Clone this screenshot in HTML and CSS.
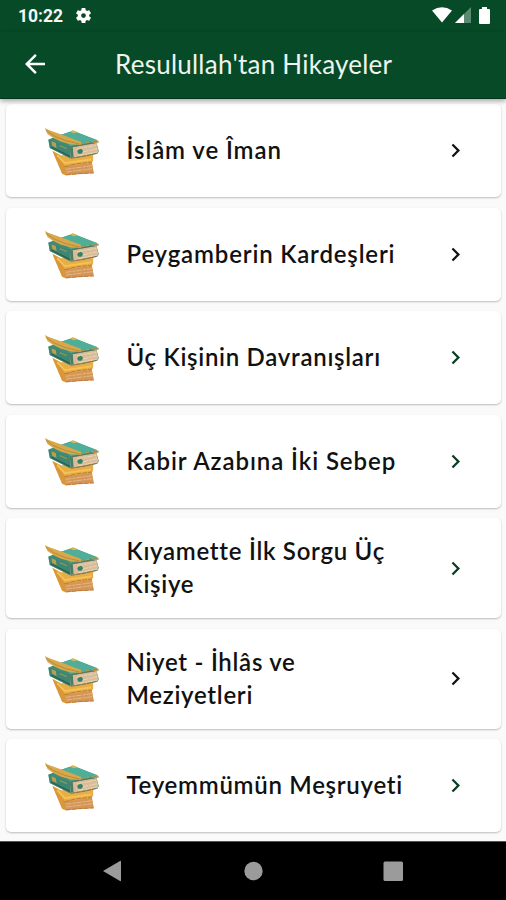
FILE: index.html
```html
<!DOCTYPE html>
<html lang="tr">
<head>
<meta charset="utf-8">
<title>Resulullah'tan Hikayeler</title>
<link rel="stylesheet" href="styles.css">
</head>
<body>
<svg class="defs" width="0" height="0">
  <symbol id="books" viewBox="25 30 170 150">
    <path d="M50 104 L76 118 L172 112 L172 134 L168 139 L174 170 L88 178 L79 173 Z" fill="#e9ad45"/>
    <path d="M50 106 L62 113 L88 152 L92 177 L79 173 Z" fill="#d9973a"/>
    <path d="M86 152 L168 140 L173 171 L92 176 Z" fill="#d49658"/>
    <path d="M90 160 L168 149 M91 168 L171 158" stroke="#e9bd88" stroke-width="2.5" stroke-dasharray="17 3 9 2" fill="none"/>
    <path d="M86 152 L120 144 L169 138 M90 177 L130 173 L174 171" stroke="#b5702f" stroke-width="2.5" stroke-dasharray="15 3" fill="none"/>
    <path d="M64 118 L87 141 L166 130" stroke="#f5c355" stroke-width="5" fill="none"/>
    <path d="M37 71 L58 62 L112 44 L188 75 L182 81 L189 106 L184 113 L103 127 L42 96 Z" fill="#3f8d79"/>
    <path d="M66 60 L111 44 L184 72 L105 90 Z" fill="#4fae97"/>
    <path d="M39 70 L101 94 L103 126 L42 96 Z" fill="#3c8673"/>
    <path d="M46 93 L102 121" stroke="#2d5f50" stroke-width="4" fill="none"/>
    <path d="M47 76 L60 81 L62 96 L49 89 Z" fill="#b99f50"/>
    <path d="M72 89 L93 98" stroke="#8a9658" stroke-width="4" fill="none"/>
    <path d="M102 95 L182 81 L188 107 L182 112 L105 126 Z" fill="#d9bd99"/>
    <path d="M124 98 L180 88 M140 108 L184 98 M126 119 L183 108" stroke="#ecd3b3" stroke-width="3" stroke-dasharray="17 3 9 2" fill="none"/>
    <path d="M102 94 L145 85 L185 79 M105 127 L145 121 L184 112" stroke="#7b6446" stroke-width="2.500" stroke-dasharray="14 2" fill="none"/>
    <path d="M102 95 L111 94 L113 123 L105 125 Z" fill="#4a7c66"/>
    <path d="M127 101 L136 98 L142 105 L137 113 L128 113 L124 107 Z" fill="#328267"/>
    <path d="M128 86 L184 73" stroke="#c9a54c" stroke-width="2.500" stroke-dasharray="16 3" fill="none"/>
    <path d="M102 46 L112 43 L126 49 L113 52 Z" fill="#dab659"/>
    <path d="M27 36 L39 42 L83 58 L136 78 L134 86 L104 85 L76 77 L51 65 L35 54 Z" fill="#d9a84a"/>
    <path d="M30 43 L55 60 L90 74 L131 84" stroke="#a87a36" stroke-width="2" fill="none"/>
    <path d="M188 74 L166 81 L189 80 Z" fill="#cf9c55"/>
  </symbol>
  <symbol id="chevron" viewBox="0 0 24 24"><path d="M10 6 8.59 7.41 13.17 12l-4.58 4.59L10 18l6-6z"/></symbol>
</svg>

<div class="statusbar">
  <span class="clock">10:22</span>
  <svg class="gear" viewBox="0 0 24 24"><path fill-rule="evenodd" d="M19.14 12.94a7.5 7.5 0 0 0 0-1.88l2.03-1.58a.5.5 0 0 0 .12-.61l-1.92-3.32a.5.5 0 0 0-.59-.22l-2.39.96a7 7 0 0 0-1.62-.94l-.36-2.54a.5.5 0 0 0-.48-.41h-3.84a.5.5 0 0 0-.47.41l-.36 2.54a7.4 7.4 0 0 0-1.62.94l-2.39-.96a.5.5 0 0 0-.59.22L2.74 8.87a.5.5 0 0 0 .12.61l2.03 1.58a7.500 7.500 0 0 0 0 1.88l-2.03 1.58a.5.5 0 0 0-.12.61l1.92 3.32c.12.22.37.29.59.22l2.39-.96c.5.38 1.030.7 1.620.94l.36 2.540c.05.24.24.41.48.41h3.840c.24 0 .44-.17.47-.41l.36-2.540a7.400 7.400 0 0 0 1.620-.94l2.390.96c.22.08.47 0 .59-.22l1.920-3.320a.5.5 0 0 0-.12-.61zM12 15a3 3 0 1 1 0-6 3 3 0 0 1 0 6z"/></svg>
  <div class="indicators">
    <svg width="20" height="16" viewBox="0 0 20 16"><path d="M0 3.500Q10-3 20 3.500L10 15.500z"/></svg>
    <svg width="16" height="16" viewBox="0 0 16 16"><path d="M0 16 16 0v16z" opacity=".35"/><path d="M0 16 9 7v9z"/></svg>
    <svg width="11" height="17" viewBox="0 0 11 17"><path d="M3 0h5v2h2q1 0 1 1v13q0 1-1 1H1q-1 0-1-1V3q0-1 1-1h2z"/></svg>
  </div>
</div>
<header class="appbar">
  <svg class="back" viewBox="0 0 24 24"><path d="M20 11H7.830l5.590-5.590L12 4l-8 8 8 8 1.410-1.410L7.830 13H20z"/></svg>
  <h1 class="title">Resulullah'tan Hikayeler</h1>
</header>
<main class="list">
  <div class="card"><svg class="books"><use href="#books"/></svg><span class="label wide">İslâm ve Îman</span><svg class="chevron"><use href="#chevron"/></svg></div>
  <div class="card"><svg class="books"><use href="#books"/></svg><span class="label medium">Peygamberin Kardeşleri</span><svg class="chevron"><use href="#chevron"/></svg></div>
  <div class="card"><svg class="books"><use href="#books"/></svg><span class="label">Üç Kişinin Davranışları</span><svg class="chevron green"><use href="#chevron"/></svg></div>
  <div class="card"><svg class="books"><use href="#books"/></svg><span class="label wide">Kabir Azabına İki Sebep</span><svg class="chevron green"><use href="#chevron"/></svg></div>
  <div class="card tall"><svg class="books"><use href="#books"/></svg><span class="label">Kıyamette İlk Sorgu Üç<br>Kişiye</span><svg class="chevron green"><use href="#chevron"/></svg></div>
  <div class="card tall"><svg class="books"><use href="#books"/></svg><span class="label">Niyet - İhlâs ve<br>Meziyetleri</span><svg class="chevron"><use href="#chevron"/></svg></div>
  <div class="card"><svg class="books"><use href="#books"/></svg><span class="label">Teyemmümün Meşruyeti</span><svg class="chevron green"><use href="#chevron"/></svg></div>
</main>
<nav class="navbar">
  <svg width="20" height="22" viewBox="0 0 20 22"><path d="M0 11 17 1q1-.5 1 .5v19q0 1-1 .5z"/></svg>
  <svg width="20" height="20" viewBox="0 0 20 20"><circle cx="10.500" cy="10" r="9.200"/></svg>
  <svg width="20" height="20" viewBox="0 0 20 20"><rect x=".5" y=".5" width="19.500" height="19.500" rx="1.500"/></svg>
</nav>
</body>
</html>
```
FILE: styles.css
```css
* { box-sizing: border-box; }
body {
  margin: 0;
  width: 506px;
  height: 900px;
  overflow: hidden;
  display: flex;
  flex-direction: column;
  background: #fafafa;
  font-family: Lato, "Open Sans", sans-serif;
}
.defs { position: absolute; }
.statusbar {
  flex: none;
  height: 32px;
  padding: 0 16px 0 18px;
  display: flex;
  align-items: center;
  background: #064a27;
  color: #f4f8f4;
  fill: #fff;
}
.clock { font: 700 17.5px/32px Roboto, sans-serif; width: 56px; }
.gear { width: 19px; height: 19px; margin-top: -1px; }
.indicators { margin-left: auto; display: flex; align-items: center; gap: 3px; margin-top: -2px; }
.indicators svg:last-child { margin-left: 5px; }
.appbar {
  flex: none;
  position: relative;
  z-index: 1;
  height: 67px;
  display: flex;
  align-items: center;
  padding: 0 20px 2px;
  background: #064a27;
  border-bottom: 1px solid #02371a;
  box-shadow: 0 2px 5px rgba(0, 0, 0, .35);
}
.back { width: 30px; height: 30px; fill: #fff; }
.title {
  margin: 0 0 0 65px;
  font-size: 26px;
  font-weight: 400;
  line-height: 34px;
  letter-spacing: .24px;
  color: #eef4ee;
  white-space: nowrap;
}
.list {
  flex: none;
  height: 742px;
  padding: 5px 5px 0 6px;
  display: flex;
  flex-direction: column;
  gap: 10.5px;
}
.card {
  flex: none;
  height: 93px;
  padding: 0 32.500px 0 37.500px;
  display: flex;
  align-items: center;
  background: #fff;
  border-radius: 5px;
  box-shadow: 0 1px 2px rgba(0, 0, 0, .25);
}
.card.tall { height: 100.200px; }
.books { flex: none; width: 57px; height: 50px; }
.label {
  flex: 1;
  margin-left: 26px;
  padding-bottom: 2px;
  font-size: 24px;
  line-height: 33px;
  font-weight: 600;
  letter-spacing: .72px;
  color: #111;
  white-space: nowrap;
}
.label.medium { letter-spacing: .83px; }
.label.wide { letter-spacing: .92px; }
.chevron { flex: none; width: 27px; height: 27px; fill: #111; }
.chevron.green { fill: #0b3d24; }
.navbar {
  flex: none;
  height: 59px;
  padding: 0 103px;
  display: flex;
  align-items: center;
  justify-content: space-between;
  background: #000;
  border-top: 1px solid #555;
  fill: #9b9b9b;
}
```
